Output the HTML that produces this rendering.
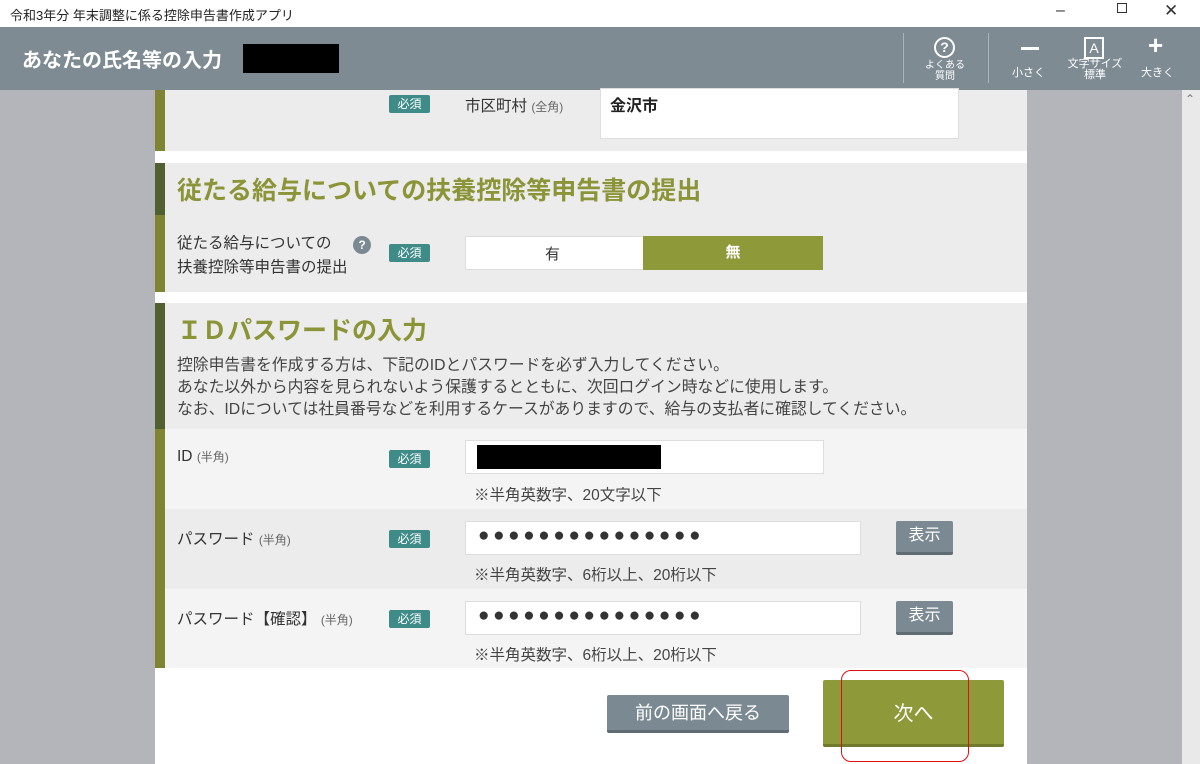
<!DOCTYPE html>
<html><head><meta charset="utf-8"><style>
*{margin:0;padding:0;box-sizing:border-box}
body{width:1200px;height:764px;overflow:hidden;position:relative;background:#b4b5ba;font-family:"Liberation Sans","Noto Sans CJK JP",sans-serif;color:#333}
.a{position:absolute}
.req{position:absolute;background:#3f8b88;color:#fff;font-size:12px;width:41px;height:18px;line-height:18px;text-align:center;border-radius:2px}
.inp{position:absolute;background:#fff;border:1px solid #ddd}
.btn{position:absolute;background:#7b8a92;color:#fff;border-bottom:3px solid #5f6c73;border-radius:2px;text-align:center}
.dots{font-size:19px;letter-spacing:3.6px;color:#333;position:absolute;left:12px;top:3px}
.note{position:absolute;font-size:15.5px;color:#444}
.lbl{position:absolute;font-size:15.5px;color:#333}
.sm{font-size:12px;color:#666}
</style></head><body>
<div class="a" style="left:0;top:0;width:1200px;height:27px;background:#fff"></div>
<div class="a" style="left:10px;top:5px;font-size:13px;color:#222">令和3年分 年末調整に係る控除申告書作成アプリ</div>
<div class="a" style="left:1056px;top:2px;font-size:16px">–</div>
<div class="a" style="left:1117px;top:3px;width:10px;height:10px;border:1px solid #333"></div>
<div class="a" style="left:1164px;top:1px;font-size:17px">✕</div>
<div class="a" style="left:0;top:27px;width:1200px;height:63px;background:#7e8b93"></div>
<div class="a" style="left:22px;top:44px;font-size:20px;font-weight:bold;color:#fff">あなたの氏名等の入力</div>
<div class="a" style="left:243px;top:44px;width:96px;height:29px;background:#000"></div>
<div class="a" style="left:903px;top:33px;width:1px;height:50px;background:#aab4ba"></div>
<div class="a" style="left:988px;top:33px;width:1px;height:50px;background:#aab4ba"></div>
<div class="a" style="left:934px;top:37px;width:21px;height:21px;border:2px solid #fff;border-radius:50%;color:#fff;font-size:14px;font-weight:bold;text-align:center;line-height:17px">?</div>
<div class="a" style="left:918px;top:60px;width:54px;font-size:10px;line-height:11px;color:#fff;text-align:center">よくある<br>質問</div>
<div class="a" style="left:1021px;top:47px;width:18px;height:3px;background:#fff"></div>
<div class="a" style="left:1012px;top:64px;font-size:11px;color:#fff">小さく</div>
<div class="a" style="left:1084px;top:37px;width:20px;height:22px;border:2px solid #fff;color:#fff;font-size:14px;text-align:center;line-height:18px">A</div>
<div class="a" style="left:1064px;top:59px;width:62px;font-size:11px;line-height:11px;color:#fff;text-align:center">文字サイズ<br>標準</div>
<div class="a" style="left:1148px;top:30px;font-size:26px;color:#fff;font-weight:bold">+</div>
<div class="a" style="left:1141px;top:64px;font-size:11px;color:#fff">大きく</div>
<div class="a" style="left:1182px;top:90px;width:18px;height:674px;background:#e9e9e9"></div>
<div class="a" style="left:1185px;top:92px;font-size:12px;color:#777">⌃</div>

<div class="a" style="left:155px;top:90px;width:872px;height:674px;background:#fff"></div>
<div class="a" style="left:155px;top:90px;width:872px;height:61px;background:#ececec"></div>
<div class="a" style="left:155px;top:90px;width:10px;height:61px;background:#7e8434"></div>
<div class="req" style="left:389px;top:95px">必須</div>
<div class="lbl" style="left:465px;top:94px">市区町村 <span class="sm">(全角)</span></div>
<div class="inp" style="left:600px;top:88px;width:359px;height:51px"></div>
<div class="a" style="left:610px;top:92px;font-size:16px;font-weight:bold;color:#222">金沢市</div>

<div class="a" style="left:155px;top:163px;width:872px;height:129px;background:#ececec"></div>
<div class="a" style="left:155px;top:163px;width:10px;height:52px;background:#506030"></div>
<div class="a" style="left:155px;top:215px;width:10px;height:77px;background:#7e8434"></div>
<div class="a" style="left:177px;top:171px;font-size:25px;font-weight:bold;color:#8b9437">従たる給与についての扶養控除等申告書の提出</div>
<div class="lbl" style="left:177px;top:232px;line-height:24px">従たる給与についての<br>扶養控除等申告書の提出</div>
<div class="a" style="left:353px;top:236px;width:18px;height:18px;border-radius:50%;background:#7b8a92;color:#fff;font-size:12px;font-weight:bold;text-align:center;line-height:18px">?</div>
<div class="req" style="left:389px;top:244px">必須</div>
<div class="inp" style="left:465px;top:236px;width:358px;height:34px"></div>
<div class="a" style="left:545px;top:243px;font-size:15px">有</div>
<div class="a" style="left:643px;top:236px;width:180px;height:34px;background:#8e9a3a;color:#fff;font-weight:bold;font-size:15px;text-align:center;line-height:34px">無</div>

<div class="a" style="left:155px;top:303px;width:872px;height:126px;background:#ececec"></div>
<div class="a" style="left:155px;top:429px;width:872px;height:80px;background:#f4f4f4"></div>
<div class="a" style="left:155px;top:509px;width:872px;height:80px;background:#ececec"></div>
<div class="a" style="left:155px;top:589px;width:872px;height:79px;background:#f4f4f4"></div>
<div class="a" style="left:155px;top:303px;width:10px;height:126px;background:#506030"></div>
<div class="a" style="left:155px;top:429px;width:10px;height:239px;background:#7e8434"></div>
<div class="a" style="left:177px;top:311px;font-size:25px;font-weight:bold;color:#8b9437">ＩＤパスワードの入力</div>
<div class="a" style="left:177px;top:355px;font-size:15.8px;line-height:22px;color:#444;white-space:nowrap">控除申告書を作成する方は、下記のIDとパスワードを必ず入力してください。<br>あなた以外から内容を見られないよう保護するとともに、次回ログイン時などに使用します。<br>なお、IDについては社員番号などを利用するケースがありますので、給与の支払者に確認してください。</div>
<div class="lbl" style="left:177px;top:448px">ID <span class="sm">(半角)</span></div>
<div class="req" style="left:389px;top:450px">必須</div>
<div class="inp" style="left:465px;top:440px;width:359px;height:34px"></div>
<div class="a" style="left:477px;top:445px;width:184px;height:24px;background:#000"></div>
<div class="note" style="left:474px;top:483px">※半角英数字、20文字以下</div>
<div class="lbl" style="left:177px;top:527px">パスワード <span class="sm">(半角)</span></div>
<div class="req" style="left:389px;top:530px">必須</div>
<div class="inp" style="left:465px;top:521px;width:396px;height:34px"><span class="dots">●●●●●●●●●●●●●●●</span></div>
<div class="btn" style="left:896px;top:521px;width:57px;height:34px;font-size:16px;line-height:30px">表示</div>
<div class="note" style="left:474px;top:563px">※半角英数字、6桁以上、20桁以下</div>
<div class="lbl" style="left:177px;top:607px">パスワード【確認】 <span class="sm">(半角)</span></div>
<div class="req" style="left:389px;top:610px">必須</div>
<div class="inp" style="left:465px;top:601px;width:396px;height:34px"><span class="dots">●●●●●●●●●●●●●●●</span></div>
<div class="btn" style="left:896px;top:601px;width:57px;height:34px;font-size:16px;line-height:30px">表示</div>
<div class="note" style="left:474px;top:643px">※半角英数字、6桁以上、20桁以下</div>

<div class="btn" style="left:607px;top:695px;width:182px;height:38px;font-size:18px;line-height:36px">前の画面へ戻る</div>
<div class="a" style="left:823px;top:680px;width:181px;height:67px;background:#8e9a3a;border-bottom:3px solid #6f7a2a;border-radius:2px;color:#fff;font-size:20px;text-align:center;line-height:68px">次へ</div>
<div class="a" style="left:841px;top:670px;width:128px;height:92px;border:1.5px solid #e01010;border-radius:10px"></div>
</body></html>
